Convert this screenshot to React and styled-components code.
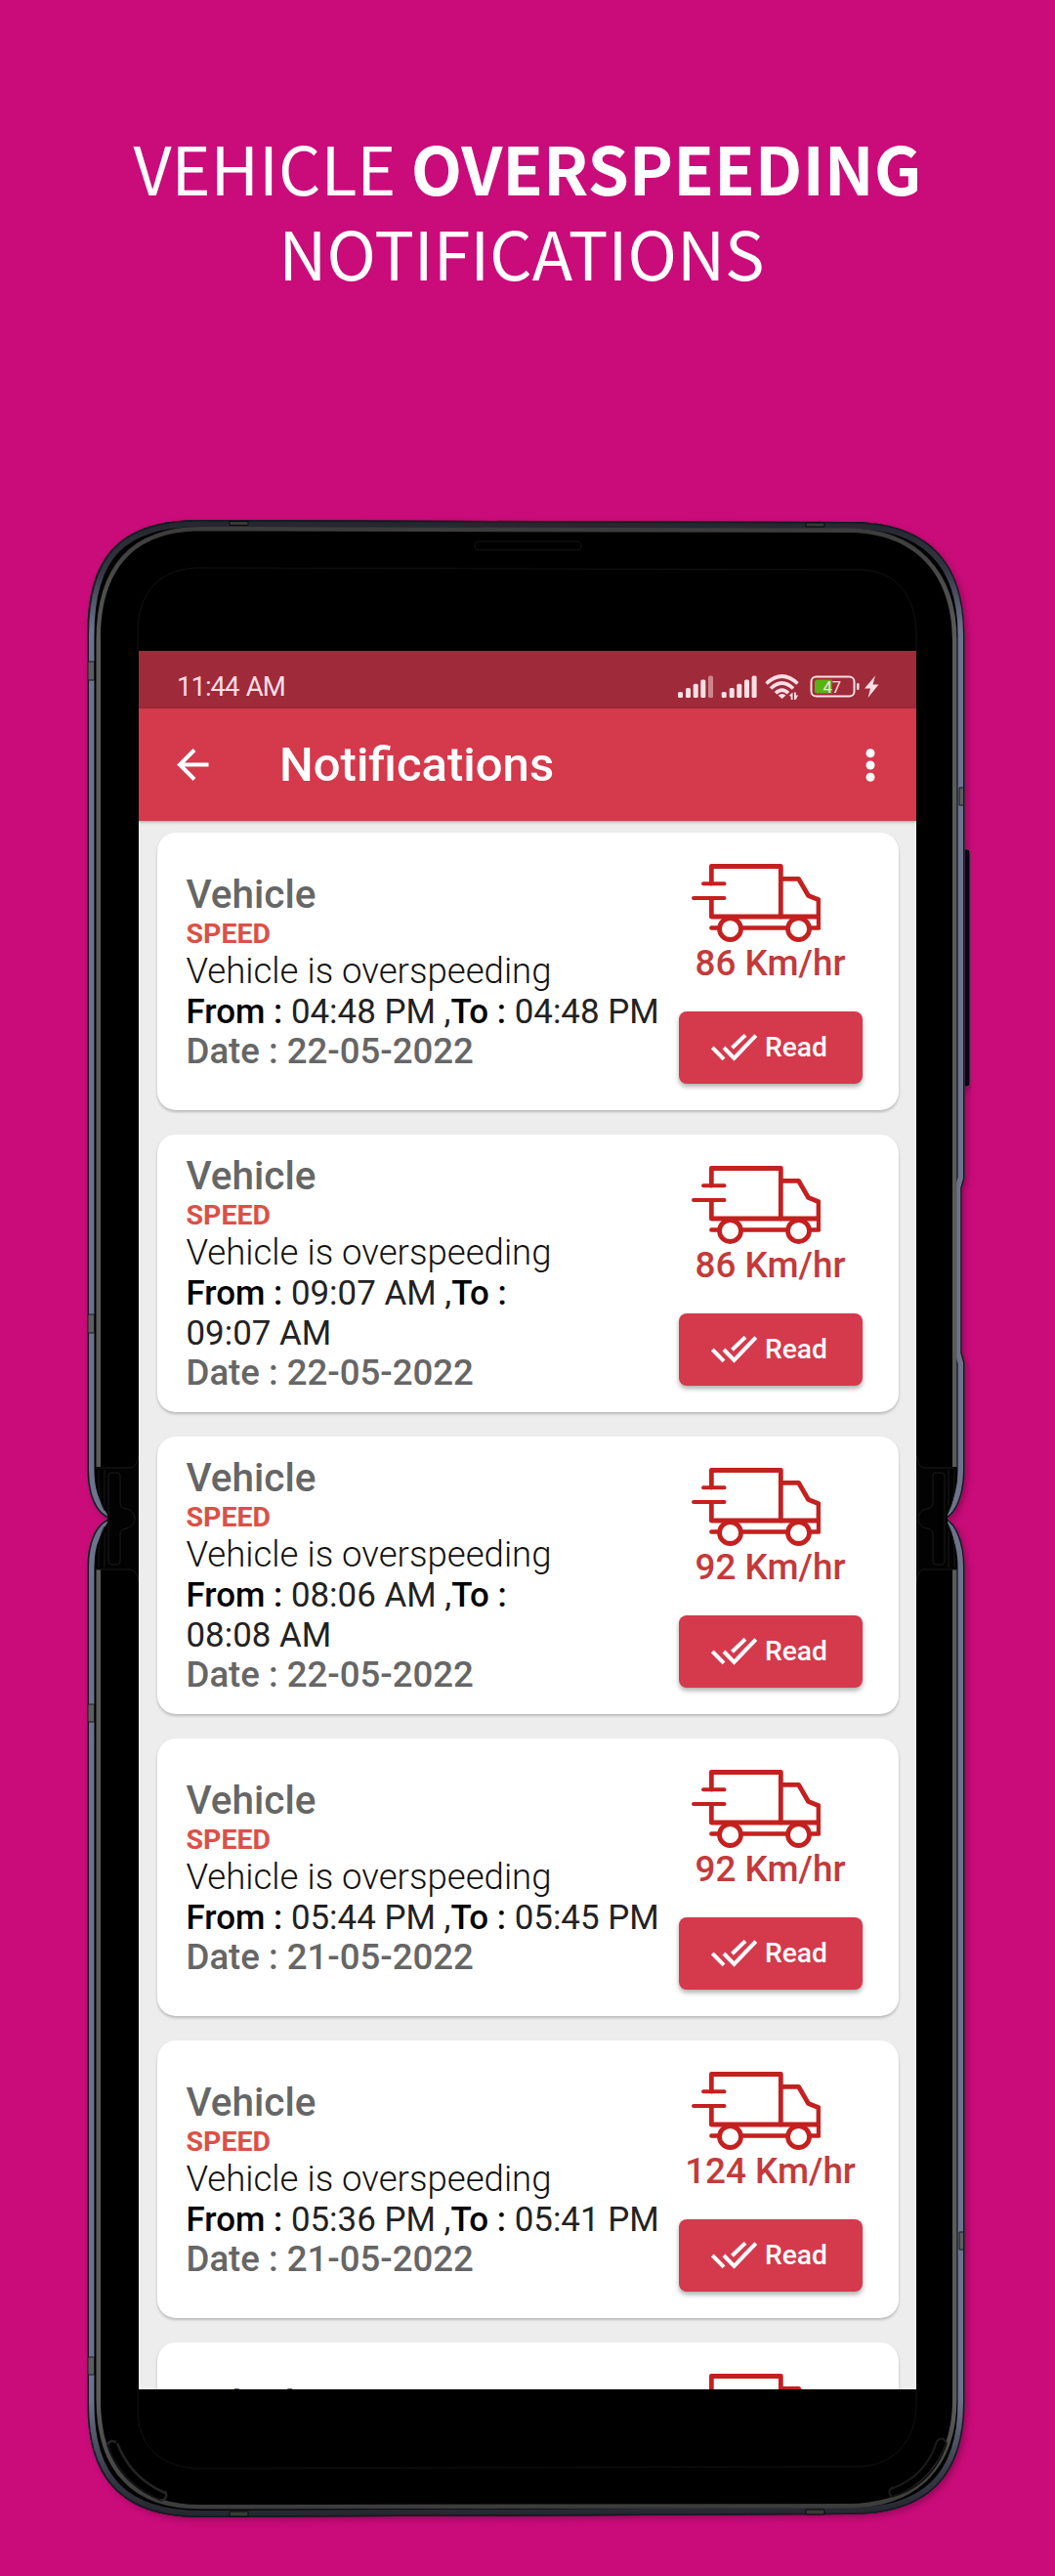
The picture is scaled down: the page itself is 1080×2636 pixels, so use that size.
import React from "react";
import styled, { createGlobalStyle } from "styled-components";

const Global = createGlobalStyle`
  * { box-sizing: border-box; }
  body { margin: 0; background: #ca0b7a; }
`;

const Page = styled.main`
  width: 1080px;
  height: 2636px;
  overflow: hidden;
  background: #ca0b7a;
  display: flex;
  flex-direction: column;
  align-items: center;
  padding-top: 127px;
  font-family: Roboto, sans-serif;
`;

const Headline = styled.h1`
  margin: 0;
  height: 399px;
  font-family: "Noto Sans CJK SC", sans-serif;
  font-weight: 400;
  font-size: 68px;
  line-height: 87px;
  color: #fff;
  text-align: center;
  white-space: nowrap;
  strong { font-weight: 700; }
`;

const SecondLine = styled.span`
  display: block;
  padding-right: 12px;
`;

const Phone = styled.section`
  position: relative;
  width: 920px;
  height: 2060px;
  padding: 140px 62px 0;
`;

const PhoneArt = styled.svg`
  position: absolute;
  left: 0;
  top: 0;
  display: block;
`;

const Screen = styled.div`
  position: relative;
  width: 796px;
  height: 1779px;
  overflow: hidden;
  background: #ededed;
  display: flex;
  flex-direction: column;
`;

const StatusBar = styled.div`
  flex: none;
  height: 59px;
  padding: 14px 38px 0 39px;
  background: #9f2a39;
  color: #ffdfe4;
  display: flex;
  justify-content: space-between;
  font-size: 27.5px;
  line-height: 46px;
  letter-spacing: -1px;
  word-spacing: 1.5px;
`;

const StatusGlyphs = styled.svg`
  display: block;
  margin-top: 9px;
  letter-spacing: 0;
`;

const AppBar = styled.header`
  flex: none;
  height: 115px;
  padding: 0 42px 0 39px;
  background: #d5394c;
  color: #fff;
  display: flex;
  align-items: center;
  box-shadow: 0 1px 3px rgba(0, 0, 0, 0.35);
`;

const Title = styled.h2`
  margin: 0 auto 0 72px;
  font-weight: 500;
  font-size: 49px;
  line-height: 60px;
`;

const Feed = styled.div`
  padding: 12px 18.5px 0;
  display: flex;
  flex-direction: column;
  gap: 25px;
`;

const Card = styled.article`
  flex: none;
  height: 284px;
  border-radius: 19px;
  background: #fff;
  box-shadow: 0 2px 3px rgba(0, 0, 0, 0.22);
  display: flex;
  align-items: center;
`;

const Details = styled.div`
  flex: none;
  width: 526px;
  padding: 0 0 1px 30px;
`;

const Name = styled.div`
  font-size: 40.5px;
  line-height: 46.5px;
  padding-bottom: 1.5px;
  font-weight: 500;
  color: #666;
`;

const Kind = styled.div`
  font-size: 28.5px;
  line-height: 32px;
  font-weight: 700;
  color: #dc5047;
`;

const Message = styled.div`
  font-size: 36.6px;
  line-height: 43px;
  font-weight: 300;
  color: #111;
`;

const Period = styled.div`
  font-size: 34.9px;
  line-height: 41px;
  color: #222;
  white-space: nowrap;
  b { font-weight: 500; color: #000; }
`;

const DateLine = styled.div`
  font-size: 36.6px;
  line-height: 40px;
  font-weight: 500;
  color: #666;
`;

const Side = styled.div`
  flex: none;
  width: 204px;
  height: 284px;
  padding-top: 30px;
  display: flex;
  flex-direction: column;
  align-items: center;
`;

const Truck = styled.svg`
  display: block;
  width: 136px;
  height: 84px;
  margin-right: 34px;
`;

const Speed = styled.div`
  margin-top: -1.5px;
  font-size: 36.8px;
  line-height: 42px;
  font-weight: 500;
  color: #c43a3a;
  white-space: nowrap;
`;

const ReadButton = styled.button`
  flex: none;
  width: 188px;
  height: 74px;
  margin-top: 28px;
  padding: 0 2px 0 0;
  border: 0;
  border-radius: 8px;
  background: #d5394c;
  color: #fff;
  box-shadow: 0 3px 5px rgba(0, 0, 0, 0.32);
  display: flex;
  align-items: center;
  justify-content: center;
  gap: 8px;
  font: 500 28.2px/34px Roboto, sans-serif;
`;

const StatusIcons = () => (
  <StatusGlyphs width="206" height="32" viewBox="694 689 206 32" fill="#ffdfe4">
    {[694, 702, 709.7, 717.3, 725].map((x, i) => (
      <rect key={x} x={x} y={[708, 704, 699.7, 695.5, 691.5][i]} width="5" height={[6, 10, 14.3, 18.5, 22.5][i]} rx="1.5" opacity={i === 4 ? 0.5 : 1} />
    ))}
    {[738.7, 746.7, 754.3, 762, 769.6].map((x, i) => (
      <rect key={x} x={x} y={[708, 704, 699.7, 695.5, 691.5][i]} width="5" height={[6, 10, 14.3, 18.5, 22.5][i]} rx="1.5" />
    ))}
    <g fill="none" stroke="#ffdfe4" strokeWidth="3.6">
      <path d="M784.5 699.5 Q800.5 684.5 816.5 699.5" />
      <path d="M789 704.5 Q800.5 693.5 812 704.5" />
      <path d="M794 709.3 Q800.5 703 807 709.3" />
    </g>
    <path d="M796.5 711.5 Q800.5 708.5 804.5 711.5 L800.5 715z" />
    <path d="M811.5 708.5v7.5h-1.8v-3l-1.700-1.500zM813 716v-7.500h1.800v3h2.300l-2.500 4.500z" />
    <rect x="830.5" y="692.5" width="44" height="20" rx="5" fill="none" stroke="#ffdfe4" strokeWidth="2" />
    <path d="M836.5 695.5h15v14h-15a2.500 2.500 0 0 1-2.500-2.500v-9a2.500 2.500 0 0 1 2.500-2.500z" fill="#57b512" />
    <rect x="877" y="699" width="2.500" height="7" rx="1.200" />
    <text x="842.5" y="708.500" fontSize="16.500" fontFamily="Roboto, sans-serif">47</text>
    <path d="M896 691.500l-11 13h6l-2.500 9.500 11-13.500h-6z" />
  </StatusGlyphs>
);

const BackIcon = () => (
  <svg width="33" height="33" viewBox="0 0 33 33" fill="none" stroke="#fff" strokeWidth="4">
    <path d="M32.500 16.500H3M18 1.500L3 16.500l15 15" />
  </svg>
);

const MoreIcon = () => (
  <svg width="10" height="34" viewBox="0 0 10 34" fill="#fff">
    <circle cx="5" cy="4.700" r="4.500" />
    <circle cx="5" cy="17" r="4.500" />
    <circle cx="5" cy="29.300" r="4.500" />
  </svg>
);

const TruckIcon = () => (
  <Truck viewBox="0 0 136 84" fill="none" stroke="#c4201f" strokeWidth="4.800" strokeLinecap="round" strokeLinejoin="round">
    <path d="M24.300 22V4.500H95.300V56H24.300V39" />
    <path d="M16 22.300H37.500M6 37H37.500" strokeWidth="4" />
    <path d="M95.300 17.300H113.500L123.500 34.500L134 38.800V56H95.300" />
    <path d="M134 56V67.500H126M101 67.500H56M31 67.500H24.300" strokeWidth="4.400" />
    <circle cx="43.500" cy="68.500" r="11" />
    <circle cx="113.500" cy="68.500" r="11" />
  </Truck>
);

const DoubleCheck = () => (
  <svg width="47" height="28" viewBox="0 0 47 28" fill="none" stroke="#fff" strokeWidth="4">
    <path d="M1.300 14L13 25.800M13 14L23.500 24.800L45.700 1.600M21.500 14.300L35 1.300" />
  </svg>
);

const upper = "M89.500 650 C89.500 567 124 532 205 532 L870 534 C948 534 987.500 573 987.500 650 V1206 L984.700 1216 V1384 L987.500 1394 V1504 C987.500 1530 979 1548 970 1553.200 L110 1553.200 C98 1548 89.500 1530 89.500 1504Z";
const lower = "M89.500 2460 C89.500 2541 129 2576 205 2576 L870 2573 C948 2573 987.500 2536 987.500 2458 L987.500 1604 C987.500 1578 979 1560 970 1554.800 L110 1554.800 C98 1560 89.500 1578 89.500 1604Z";
const upperInner = "M103 655 C103 582 137 543.500 205 543.500 L868 545 C936 545 975 587 975 655 L975 1501 H103Z";
const lowerInner = "M103 2455 C103 2527 139 2563 205 2563 L868 2562 C936 2562 975 2523 975 2455 L975 1606 H103Z";

const PhoneFrame = () => (
  <PhoneArt width="920" height="2060" viewBox="80 526 920 2060" fill="none">
    <defs>
      <linearGradient id="rim" gradientUnits="userSpaceOnUse" x1="0" y1="532" x2="0" y2="2577">
        <stop offset="0" stopColor="#24252d" />
        <stop offset="0.025" stopColor="#343743" />
        <stop offset="0.055" stopColor="#6d738b" />
        <stop offset="0.94" stopColor="#6d738b" />
        <stop offset="0.98" stopColor="#343743" />
        <stop offset="1" stopColor="#24252d" />
      </linearGradient>
      <linearGradient id="bezel" gradientUnits="userSpaceOnUse" x1="0" y1="532" x2="0" y2="2577">
        <stop offset="0" stopColor="#393939" />
        <stop offset="0.06" stopColor="#5a5b5b" />
        <stop offset="0.94" stopColor="#5a5b5b" />
        <stop offset="1" stopColor="#393939" />
      </linearGradient>
      <filter id="shade" x="-5%" y="-5%" width="110%" height="110%">
        <feDropShadow dx="3" dy="3" stdDeviation="3" floodColor="#50002f" floodOpacity="0.4" />
      </filter>
      <clipPath id="halves">
        <path d={upper} />
        <path d={lower} />
      </clipPath>
    </defs>
    <rect x="982" y="869" width="11" height="243" rx="3" fill="#05060f" stroke="#77405f" filter="url(#shade)" />
    <g filter="url(#shade)">
      <path d={upper} fill="#000" />
      <path d={lower} fill="#000" />
    </g>
    <g clipPath="url(#halves)">
      <path d={upper} stroke="url(#rim)" strokeWidth="14" />
      <path d={lower} stroke="url(#rim)" strokeWidth="14" />
      <path d={upper} stroke="#171922" strokeWidth="3" />
      <path d={lower} stroke="#171922" strokeWidth="3" />
    </g>
    <path d={upperInner} stroke="url(#bezel)" strokeWidth="9" />
    <path d={lowerInner} stroke="url(#bezel)" strokeWidth="9" />
    <path d={upperInner} fill="#000" />
    <path d={lowerInner} fill="#000" />
    <path d="M97 1501 Q98 1532 110 1550 V1558 Q98 1576 97 1606 H980 Q979 1576 970 1558 V1550 Q979 1532 980 1501Z" fill="#020202" />
    <path d="M111 1510q0-3 3-3h6q3 0 3 3v28q0 5 6 6c12 2 12 18 0 20q-6 1-6 6v27q0 4-3 4h-6q-3 0-3-4zM967 1510q0-3-3-3h-6q-3 0-3 3v28q0 5-6 6c-12 2-12 18 0 20q6 1 6 6v27q0 4 3 4h6q3 0 3-4z" stroke="#1b1b1b" />
    <path d="M98 1502h34q8 0 10-12M98 1606h34q8 0 10 12M980 1502h-34q-6 0-8-12M980 1606h-34q-6 0-8 12M101 1504v14q0 18 6 28M101 1604v-14q0-18 6-28M107 1504v36M107 1604v-36M977 1504v14q0 18-6 28M977 1604v-14q0-18-6-28M971 1504v36M971 1604v-36" stroke="#191919" />
    <path d="M141 666V646C141 605 165 581 205 581L880 583C918 583 938 611 938 650V666M141 2445V2467C141 2503 166 2526 205 2526L878 2524C915 2524 938 2497 938 2460V2445" stroke="#121212" />
    <rect x="486" y="554" width="109" height="9" rx="4" stroke="#101414" />
    <path d="M90 677h6.500v19h-6.500zM90 1345h6.500v19h-6.500zM90 1744h6.500v18h-6.500zM90 2412h6.500v18h-6.500zM982 806h4.500v18h-4.500zM982 2284h4.500v18h-4.500z" fill="#5d5e60" stroke="#191a20" />
    <path d="M235 533.500h19v4h-19zM825 535h19v4h-19zM235 2570h19v5h-19zM825 2568h19v5h-19z" fill="#393939" stroke="#08080c" />
    <path d="M120 2500Q134 2536 169 2551M110 2502q2-6 9-3M169 2549q4 8-5 10" stroke="#242424" strokeWidth="2.500" />
    <path d="M110 2502Q124 2542 164 2558M969 2500Q954 2544 912 2555" stroke="#121212" strokeWidth="2" />
    <path d="M959 2498Q948 2534 912 2547M959 2498q6-6 10 2M914 2545q-7 4-1 10" stroke="#1c1c1c" strokeWidth="2" />
  </PhoneArt>
);

const alerts = [
  { speed: 86, from: "04:48 PM", to: "04:48 PM", date: "22-05-2022" },
  { speed: 86, from: "09:07 AM", to: "09:07 AM", date: "22-05-2022" },
  { speed: 92, from: "08:06 AM", to: "08:08 AM", date: "22-05-2022" },
  { speed: 92, from: "05:44 PM", to: "05:45 PM", date: "21-05-2022" },
  { speed: 124, from: "05:36 PM", to: "05:41 PM", date: "21-05-2022" },
  { speed: 86, from: "05:20 PM", to: "05:21 PM", date: "21-05-2022" },
];

const AlertCard = ({ speed, from, to, date }) => (
  <Card>
    <Details>
      <Name>Vehicle</Name>
      <Kind>SPEED</Kind>
      <Message>Vehicle is overspeeding</Message>
      <Period>
        <b>From : </b>{from} ,<b>To : </b>{from.endsWith("AM") && <br />}{to}
      </Period>
      <DateLine>Date : {date}</DateLine>
    </Details>
    <Side>
      <TruckIcon />
      <Speed>{speed} Km/hr</Speed>
      <ReadButton><DoubleCheck />Read</ReadButton>
    </Side>
  </Card>
);

export default function App() {
  return (
    <Page>
      <Global />
      <Headline>
        VEHICLE <strong>OVERSPEEDING</strong>
        <SecondLine>NOTIFICATIONS</SecondLine>
      </Headline>
      <Phone>
        <PhoneFrame />
        <Screen>
          <StatusBar><span>11:44 AM</span><StatusIcons /></StatusBar>
          <AppBar><BackIcon /><Title>Notifications</Title><MoreIcon /></AppBar>
          <Feed>{alerts.map((a, i) => <AlertCard key={i} {...a} />)}</Feed>
        </Screen>
      </Phone>
    </Page>
  );
}
